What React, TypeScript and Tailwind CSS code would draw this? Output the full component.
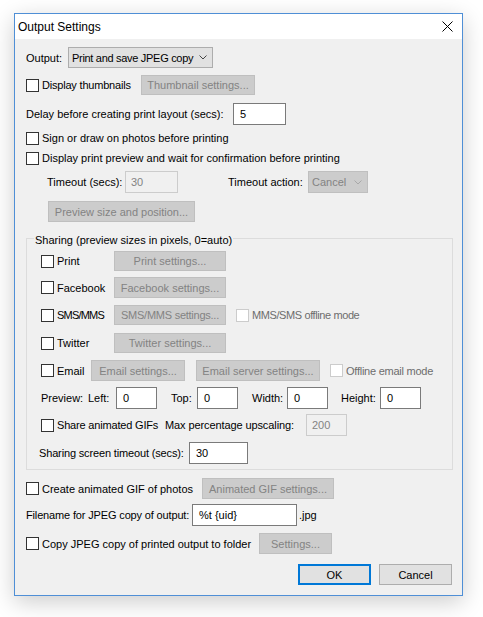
import React from "react";

function Check({ disabled = false }: { disabled?: boolean }) {
  return (
    <span
      className={
        disabled
          ? "inline-block w-[13px] h-[13px] shrink-0 border border-[#cccccc] bg-white"
          : "inline-block w-[13px] h-[13px] shrink-0 border border-[#333333] bg-white"
      }
    />
  );
}

function CheckLabel({
  label,
  w,
  disabled = false,
  tc = "",
}: {
  label: string;
  w: string;
  disabled?: boolean;
  tc?: string;
}) {
  return (
    <div className={"flex items-center shrink-0 " + w}>
      <Check disabled={disabled} />
      <span className={(disabled ? "ml-[3px] text-[#6d6d6d] whitespace-nowrap " : "ml-[3px] whitespace-nowrap ") + tc}>
        {label}
      </span>
    </div>
  );
}

function DisBtn({ label, w, tc = "" }: { label: string; w: string; tc?: string }) {
  return (
    <div
      className={
        "flex items-center justify-center h-full shrink-0 border border-[#bfbfbf] bg-[#cccccc] text-[#838383] whitespace-nowrap " +
        w +
        " " +
        tc
      }
    >
      {label}
    </div>
  );
}

function Input({ value, w, disabled = false }: { value: string; w: string; disabled?: boolean }) {
  return (
    <div
      className={
        disabled
          ? "flex items-center h-full shrink-0 border border-[#cccccc] bg-[#f0f0f0] text-[#838383] pl-[5px] " + w
          : "flex items-center h-full shrink-0 border border-[#7a7a7a] bg-white pl-[6px] " + w
      }
    >
      {value}
    </div>
  );
}

function Chevron({ color }: { color: string }) {
  return (
    <svg width="8" height="5" viewBox="0 0 8 5" className="shrink-0">
      <polyline points="0.5,0.5 4,4 7.5,0.5" fill="none" stroke={color} strokeWidth="1" />
    </svg>
  );
}

export default function App() {
  return (
    <div className="relative w-[483px] h-[617px] bg-white pl-[14px] pt-[13px] font-['Liberation_Sans'] text-[11px] text-black leading-[14px] whitespace-nowrap">
      <div className="w-[449px] h-[583px] border border-[#4f8fd6] bg-[#f0f0f0] flex flex-col shadow-[0_6px_22px_rgba(0,0,0,0.2)]">
        {/* title bar */}
        <div className="h-[25px] bg-white flex items-center justify-between pl-[3px] pr-[9px] shrink-0">
          <span className="text-[12px]">Output Settings</span>
          <svg width="11" height="11" viewBox="0 0 11 11">
            <line x1="0.5" y1="0.5" x2="10.5" y2="10.5" stroke="#000" strokeWidth="1" />
            <line x1="10.5" y1="0.5" x2="0.5" y2="10.5" stroke="#000" strokeWidth="1" />
          </svg>
        </div>

        {/* content */}
        <div className="flex flex-col pl-[11px] pr-[9px]">
          {/* Output */}
          <div className="mt-[8px] h-[21px] flex items-center">
            <span className="w-[42px] shrink-0">Output:</span>
            <div className="w-[145px] h-full border border-[#adadad] bg-[#e1e1e1] flex items-center justify-between pl-[3px] pr-[5px]">
              <span className="tracking-[-0.3px]">Print and save JPEG copy</span>
              <Chevron color="#444444" />
            </div>
          </div>

          {/* Display thumbnails */}
          <div className="mt-[7px] h-[20px] flex items-center">
            <CheckLabel label="Display thumbnails" w="w-[115px]" tc="tracking-[-0.2px]" />
            <DisBtn label="Thumbnail settings..." w="w-[114px]" />
          </div>

          {/* Delay */}
          <div className="mt-[8px] h-[22px] flex items-center">
            <span className="w-[207px] shrink-0">Delay before creating print layout (secs):</span>
            <Input value="5" w="w-[53px]" />
          </div>

          <div className="mt-[3px] h-[20px] flex items-center">
            <CheckLabel label="Sign or draw on photos before printing" w="w-[300px]" />
          </div>
          <div className="h-[20px] flex items-center">
            <CheckLabel label="Display print preview and wait for confirmation before printing" w="w-[400px]" />
          </div>

          {/* Timeout */}
          <div className="mt-[3px] h-[22px] flex items-center pl-[21px]">
            <span className="w-[78px] shrink-0">Timeout (secs):</span>
            <Input value="30" w="w-[53px]" disabled />
            <span className="ml-[50px] w-[80px] shrink-0">Timeout action:</span>
            <div className="w-[60px] h-full border border-[#bfbfbf] bg-[#cccccc] text-[#838383] flex items-center justify-between pl-[3px] pr-[5px]">
              <span>Cancel</span>
              <Chevron color="#a8a8a8" />
            </div>
          </div>

          <div className="mt-[8px] h-[21px] flex items-center pl-[22px]">
            <DisBtn label="Preview size and position..." w="w-[147px]" />
          </div>

          {/* Sharing group */}
          <div className="mt-[16px] w-[427px] border border-[#dcdcdc] relative flex flex-col pl-[14px] pb-[5px]">
            <span className="absolute left-[7px] top-[-6px] px-[1px] bg-[#f0f0f0] leading-[14px]">
              Sharing (preview sizes in pixels, 0=auto)
            </span>
            <div className="mt-[12px] h-[20px] flex items-center">
              <CheckLabel label="Print" w="w-[73px]" />
              <DisBtn label="Print settings..." w="w-[112px]" />
            </div>
            <div className="mt-[6px] h-[21px] flex items-center">
              <CheckLabel label="Facebook" w="w-[73px]" />
              <DisBtn label="Facebook settings..." w="w-[112px]" />
            </div>
            <div className="mt-[7px] h-[20px] flex items-center">
              <CheckLabel label="SMS/MMS" w="w-[73px]" tc="tracking-[-0.8px]" />
              <DisBtn label="SMS/MMS settings..." w="w-[112px]" tc="tracking-[-0.25px]" />
              <div className="ml-[10px]">
                <CheckLabel label="MMS/SMS offline mode" w="w-[140px]" disabled tc="tracking-[-0.4px]" />
              </div>
            </div>
            <div className="mt-[8px] h-[20px] flex items-center">
              <CheckLabel label="Twitter" w="w-[73px]" />
              <DisBtn label="Twitter settings..." w="w-[112px]" />
            </div>
            <div className="mt-[7px] h-[21px] flex items-center">
              <CheckLabel label="Email" w="w-[50px]" />
              <DisBtn label="Email settings..." w="w-[94px]" />
              <div className="ml-[11px] h-full flex">
                <DisBtn label="Email server settings..." w="w-[124px]" />
              </div>
              <div className="ml-[10px]">
                <CheckLabel label="Offline email mode" w="w-[100px]" disabled tc="tracking-[-0.25px]" />
              </div>
            </div>
            <div className="mt-[6px] h-[22px] flex items-center">
              <span className="w-[47px] shrink-0">Preview:</span>
              <span className="w-[28px] shrink-0">Left:</span>
              <Input value="0" w="w-[41px]" />
              <span className="ml-[14px] w-[26px] shrink-0">Top:</span>
              <Input value="0" w="w-[41px]" />
              <span className="ml-[14px] w-[35px] shrink-0">Width:</span>
              <Input value="0" w="w-[41px]" />
              <span className="ml-[13px] w-[39px] shrink-0">Height:</span>
              <Input value="0" w="w-[41px]" />
            </div>
            <div className="mt-[5px] h-[22px] flex items-center">
              <CheckLabel label="Share animated GIFs" w="w-[124px]" tc="tracking-[-0.18px]" />
              <span className="w-[141px] shrink-0 tracking-[-0.1px]">Max percentage upscaling:</span>
              <Input value="200" w="w-[41px]" disabled />
            </div>
            <div className="mt-[6px] h-[22px] flex items-center -ml-[2px]">
              <span className="w-[150px] shrink-0 tracking-[-0.15px]">Sharing screen timeout (secs):</span>
              <Input value="30" w="w-[59px]" />
            </div>
          </div>

          {/* after group */}
          <div className="mt-[8px] h-[21px] flex items-center">
            <CheckLabel label="Create animated GIF of photos" w="w-[176px]" />
            <DisBtn label="Animated GIF settings..." w="w-[132px]" />
          </div>
          <div className="mt-[5px] h-[22px] flex items-center">
            <span className="w-[166px] shrink-0 tracking-[-0.15px]">Filename for JPEG copy of output:</span>
            <Input value="%t {uid}" w="w-[105px]" />
            <span className="ml-[2px]">.jpg</span>
          </div>
          <div className="mt-[7px] h-[21px] flex items-center">
            <CheckLabel label="Copy JPEG copy of printed output to folder" w="w-[233px]" />
            <DisBtn label="Settings..." w="w-[73px]" />
          </div>
          <div className="mt-[10px] h-[21px] flex items-center justify-end pr-[1px]">
            <div className="w-[73px] h-full border-2 border-[#0078d7] bg-[#e1e1e1] flex items-center justify-center">OK</div>
            <div className="ml-[8px] w-[73px] h-full border border-[#adadad] bg-[#e1e1e1] flex items-center justify-center">Cancel</div>
          </div>
        </div>
      </div>
    </div>
  );
}
